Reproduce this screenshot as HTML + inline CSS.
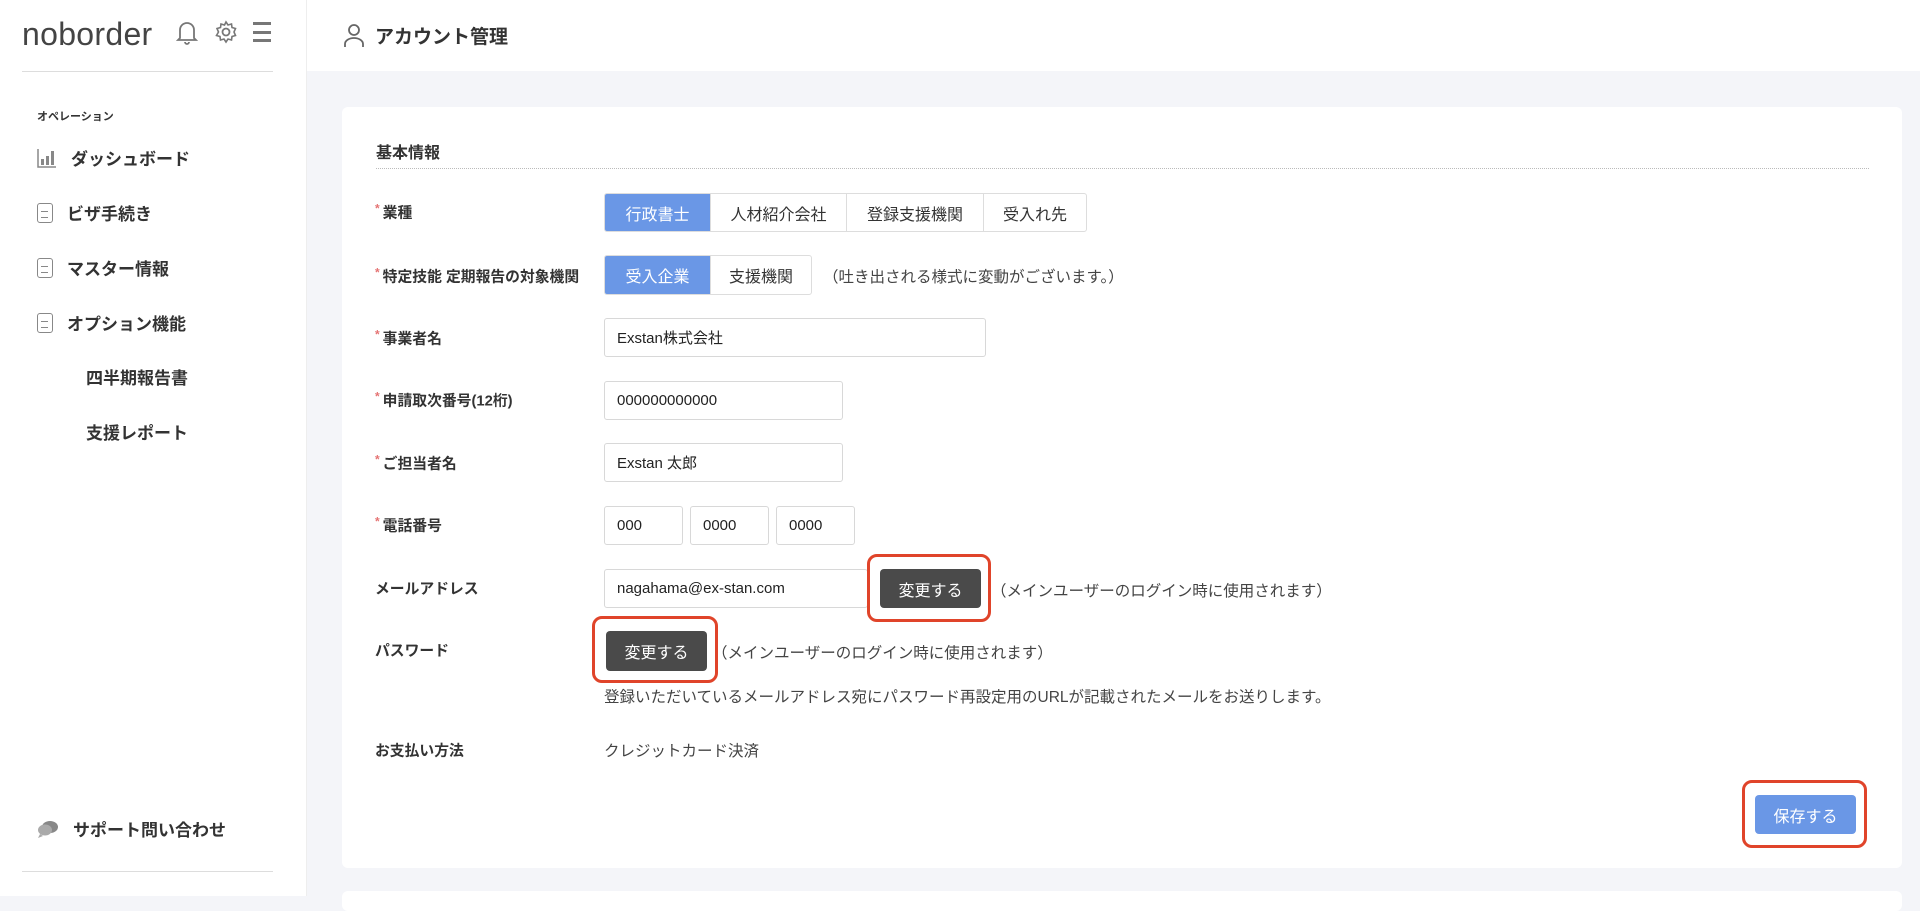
<!DOCTYPE html>
<html><head><meta charset="utf-8"><style>
*{box-sizing:border-box;margin:0;padding:0}
body{width:1920px;height:896px;overflow:hidden;background:#f4f5f9;font-family:"Liberation Sans","Noto Sans CJK JP",sans-serif;color:#333;position:relative}
.abs{position:absolute}
.side{left:0;top:0;width:307px;height:896px;background:#fff;border-right:1px solid #eee}
.logo{left:22px;top:16px;font-size:32px;color:#444;letter-spacing:0.3px}
.menu{left:37px;font-size:17px;font-weight:bold;color:#333;display:flex;align-items:center;gap:14px}
.doc{width:16px;height:20px;border:1.8px solid #888;border-radius:3px;position:relative}
.doc:after{content:"";position:absolute;left:3px;top:7px;width:7px;height:5px;border-top:1.6px solid #888;border-bottom:1.6px solid #888}
.top{left:307px;top:0;width:1613px;height:71px;background:#fff}
.card{left:342px;top:107px;width:1560px;height:761px;background:#fff;border-radius:6px}
.lbl{left:375px;font-size:14.8px;font-weight:bold;color:#333;transform:translateY(-50%)}
.lbl i{color:#e57373;font-style:normal;font-size:12px;vertical-align:5px;margin-right:3px}
.seg{display:flex;border:1px solid #ddd;border-radius:3px;overflow:hidden;height:39px}
.seg div{padding:0 18px;display:flex;align-items:center;justify-content:center;font-size:16px;border-right:1px solid #ddd;color:#333}
.seg div:last-child{border-right:none}
.seg .on{background:#6a97e6;color:#fff}
.inp{border:1px solid #d8d8d8;border-radius:3px;height:39px;display:flex;align-items:center;padding-left:12px;font-size:15px;color:#222}
.btn{background:#4a4a4a;color:#fff;border-radius:4px;font-size:16px;display:flex;align-items:center;justify-content:center}
.red{border:3px solid #e0442a;border-radius:10px}
.note{font-size:15.5px;color:#444;transform:translateY(-50%);white-space:nowrap}
</style></head><body>
<div class="abs side"></div>
<div class="abs logo">noborder</div>
<svg class="abs" style="left:176px;top:19px" width="22" height="26" viewBox="0 0 22 26"><path d="M4 19V11a7 7 0 0 1 14 0v8l2 2H2z M9 23a2 2 0 0 0 4 0" fill="none" stroke="#777" stroke-width="1.8"/></svg>
<svg class="abs" style="left:214px;top:20px" width="24" height="24" viewBox="0 0 24 24"><circle cx="12" cy="12" r="3.5" fill="none" stroke="#777" stroke-width="1.8"/><path d="M12 2l2 3 3.5-1 .5 3.5 3.5 1-1.5 3.5 1.5 3.5-3.5 1-.5 3.5-3.5-1-2 3-2-3-3.5 1-.5-3.5-3.5-1L4.5 12 3 8.5l3.5-1L7 4l3.5 1z" fill="none" stroke="#777" stroke-width="1.6"/></svg>
<div class="abs" style="left:253px;top:22px;width:18px;height:20px;border-top:3px solid #777;border-bottom:3px solid #777"><div style="margin-top:5.5px;border-top:3px solid #777"></div></div>
<div class="abs" style="left:22px;top:71px;width:251px;height:1px;background:#ddd"></div>
<div class="abs" style="left:37px;top:108px;font-size:11px;font-weight:bold">オペレーション</div>
<div class="abs menu" style="top:145px"><svg width="20" height="20" viewBox="0 0 20 20"><path d="M1 1v18h18" fill="none" stroke="#888" stroke-width="1.5"/><rect x="4" y="11" width="3" height="6" fill="#888"/><rect x="9" y="8" width="3" height="9" fill="#888"/><rect x="14" y="3" width="3" height="14" fill="#888"/></svg>ダッシュボード</div>
<div class="abs menu" style="top:200px"><span class="doc"></span>ビザ手続き</div>
<div class="abs menu" style="top:255px"><span class="doc"></span>マスター情報</div>
<div class="abs menu" style="top:310px"><span class="doc"></span>オプション機能</div>
<div class="abs menu" style="top:364px;left:86px">四半期報告書</div>
<div class="abs menu" style="top:419px;left:86px">支援レポート</div>
<div class="abs menu" style="top:816px"><svg width="22" height="18" viewBox="0 0 22 18"><ellipse cx="13" cy="7" rx="8" ry="6" fill="#888"/><ellipse cx="8" cy="10" rx="7" ry="5.5" fill="#aaa"/><path d="M3 14l-2 4 5-2z" fill="#aaa"/></svg>サポート問い合わせ</div>
<div class="abs" style="left:22px;top:871px;width:251px;height:1px;background:#ddd"></div>
<div class="abs top"></div>
<svg class="abs" style="left:343px;top:22px" width="22" height="26" viewBox="0 0 22 26"><circle cx="11" cy="8" r="5" fill="none" stroke="#666" stroke-width="1.8"/><path d="M2 25v-3a9 6 0 0 1 18 0v3" fill="none" stroke="#666" stroke-width="1.8"/></svg>
<div class="abs" style="left:375px;top:22px;font-size:19px;font-weight:bold;color:#333">アカウント管理</div>
<div class="abs card"></div>
<div class="abs" style="left:376px;top:139px;font-size:16px;font-weight:bold">基本情報</div>
<div class="abs" style="left:376px;top:168px;width:1493px;border-top:1px dotted #bbb"></div>
<div class="abs lbl" style="top:212px"><i>*</i>業種</div>
<div class="abs lbl" style="top:276px"><i>*</i>特定技能 定期報告の対象機関</div>
<div class="abs lbl" style="top:338px"><i>*</i>事業者名</div>
<div class="abs lbl" style="top:400px"><i>*</i>申請取次番号(12桁)</div>
<div class="abs lbl" style="top:463px"><i>*</i>ご担当者名</div>
<div class="abs lbl" style="top:525px"><i>*</i>電話番号</div>
<div class="abs lbl" style="top:588px">メールアドレス</div>
<div class="abs lbl" style="top:650px">パスワード</div>
<div class="abs lbl" style="top:750px">お支払い方法</div>
<div class="abs seg" style="left:604px;top:193px;width:483px"><div class="on" style="width:106px">行政書士</div><div style="width:136px">人材紹介会社</div><div style="width:137px">登録支援機関</div><div style="flex:1">受入れ先</div></div>
<div class="abs seg" style="left:604px;top:255px;width:208px;height:40px"><div class="on" style="width:106px">受入企業</div><div style="flex:1">支援機関</div></div>
<div class="abs note" style="left:823px;top:276px;font-size:15.5px">（吐き出される様式に変動がございます。）</div>
<div class="abs inp" style="left:604px;top:318px;width:382px">Exstan株式会社</div>
<div class="abs inp" style="left:604px;top:381px;width:239px">000000000000</div>
<div class="abs inp" style="left:604px;top:443px;width:239px">Exstan 太郎</div>
<div class="abs inp" style="left:604px;top:506px;width:79px">000</div>
<div class="abs inp" style="left:690px;top:506px;width:79px">0000</div>
<div class="abs inp" style="left:776px;top:506px;width:79px">0000</div>
<div class="abs inp" style="left:604px;top:569px;width:264px">nagahama@ex-stan.com</div>
<div class="abs red" style="left:867px;top:554px;width:124px;height:68px"></div>
<div class="abs btn" style="left:880px;top:569px;width:101px;height:39px">変更する</div>
<div class="abs note" style="left:991px;top:590px">（メインユーザーのログイン時に使用されます）</div>
<div class="abs red" style="left:592px;top:616px;width:126px;height:67px"></div>
<div class="abs btn" style="left:606px;top:631px;width:101px;height:40px">変更する</div>
<div class="abs note" style="left:712px;top:652px">（メインユーザーのログイン時に使用されます）</div>
<div class="abs note" style="left:604px;top:696px">登録いただいているメールアドレス宛にパスワード再設定用のURLが記載されたメールをお送りします。</div>
<div class="abs note" style="left:604px;top:750px">クレジットカード決済</div>
<div class="abs red" style="left:1742px;top:780px;width:125px;height:68px"></div>
<div class="abs btn" style="left:1755px;top:795px;width:101px;height:39px;background:#6a97e6">保存する</div>
<div class="abs" style="left:342px;top:891px;width:1560px;height:20px;background:#fff;border-radius:6px"></div>
</body></html>
